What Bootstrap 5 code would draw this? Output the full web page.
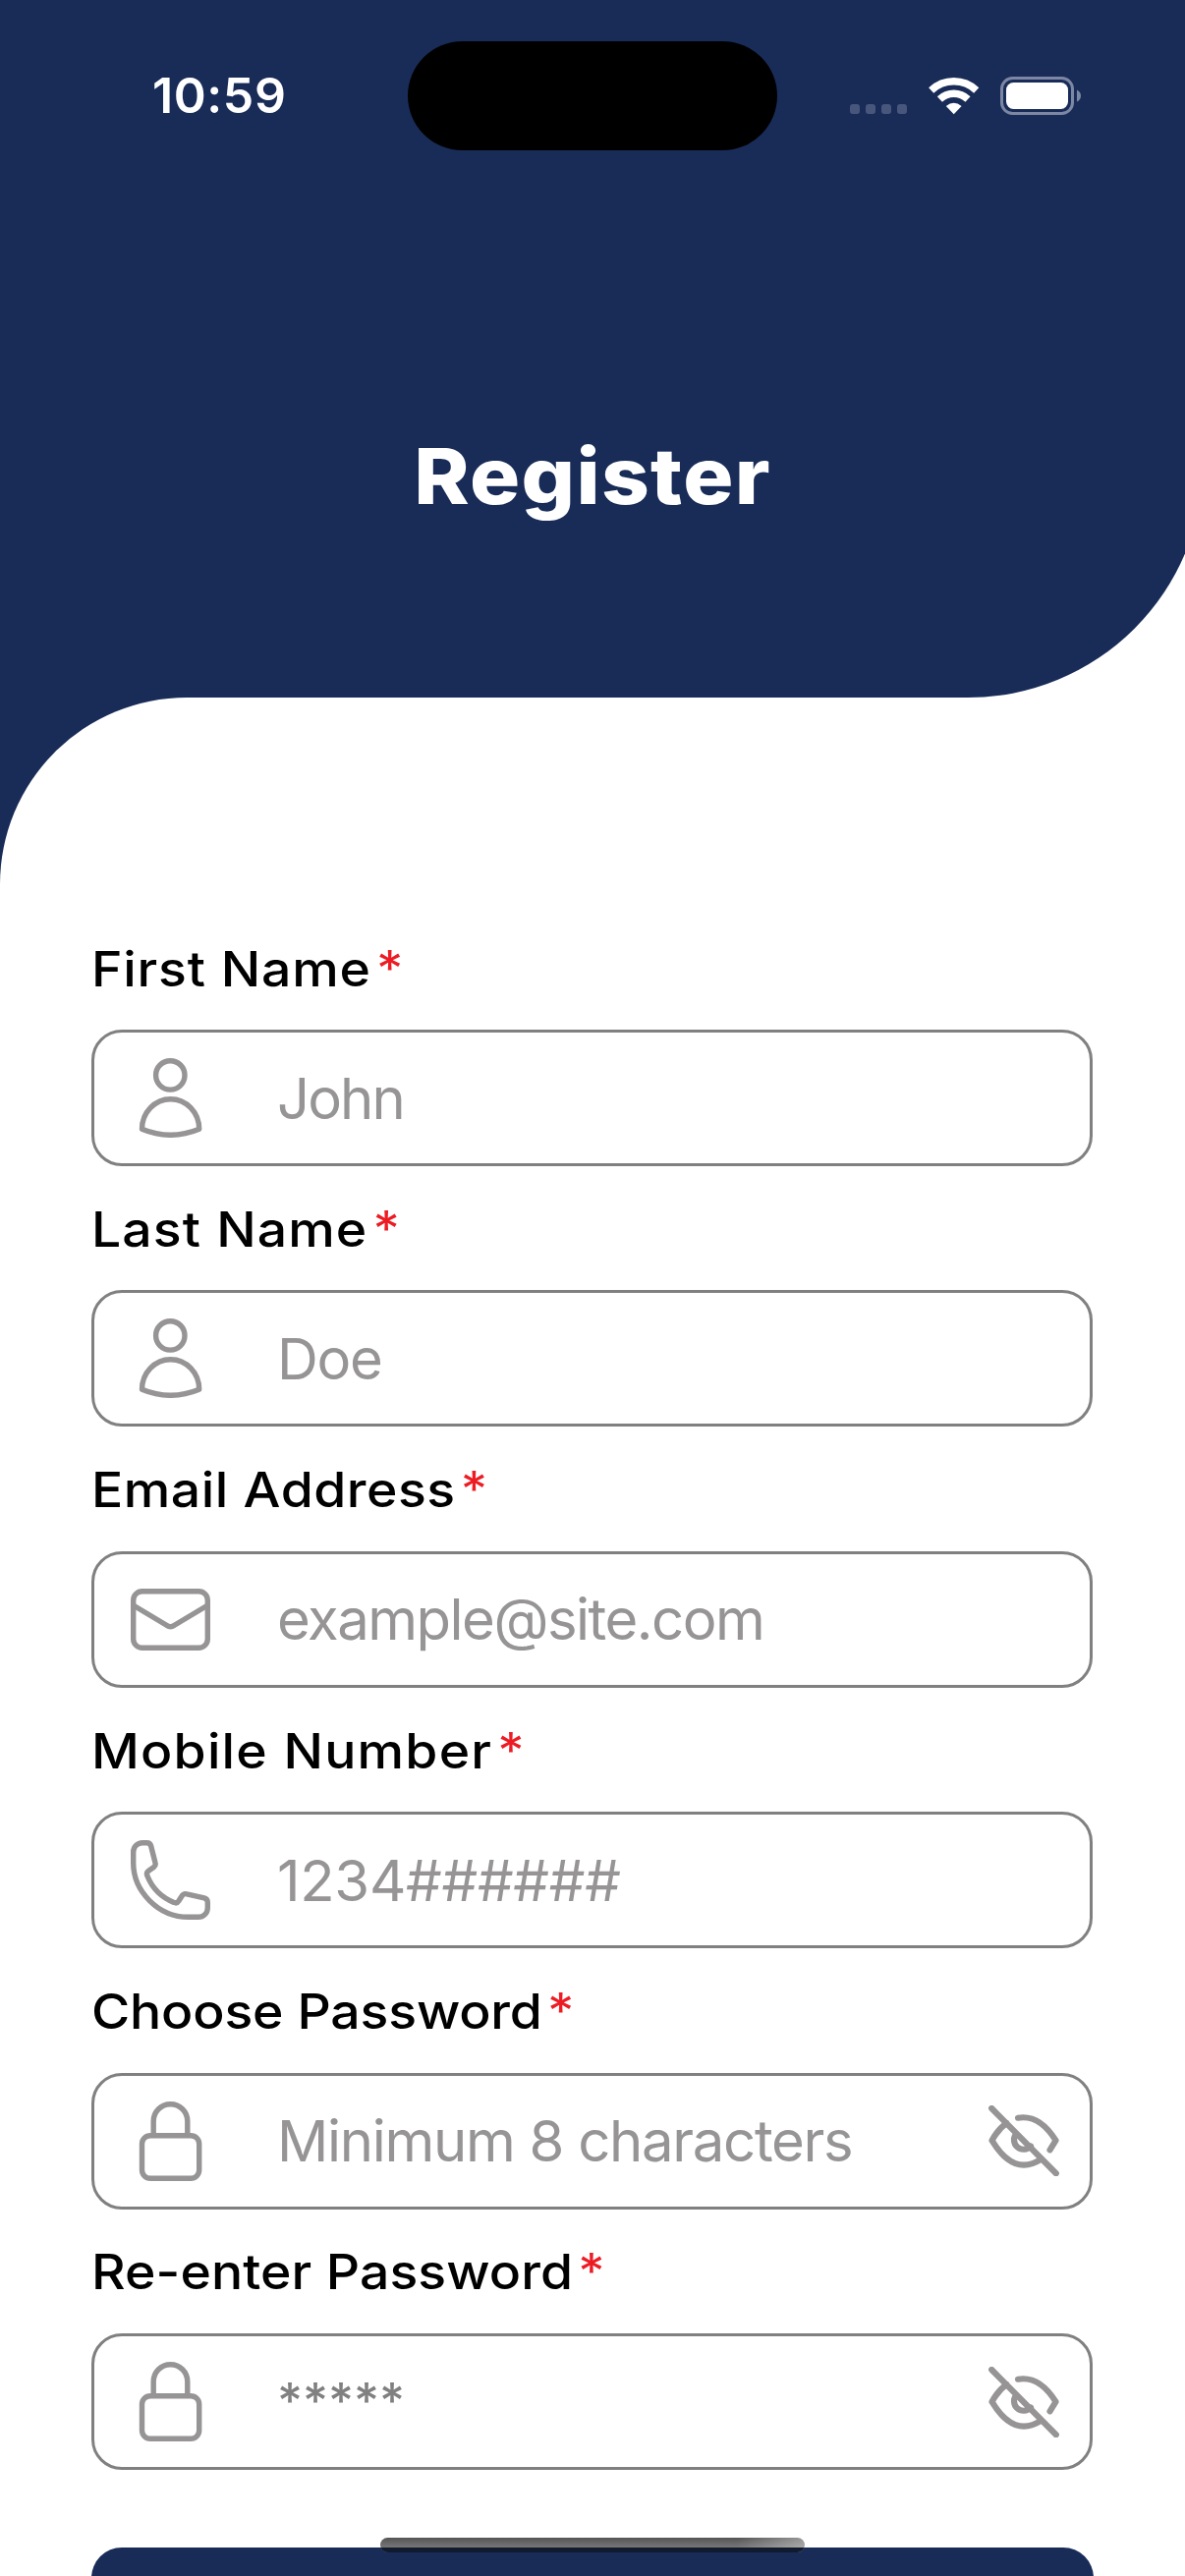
<!DOCTYPE html>
<html lang="en">
<head>
<meta charset="utf-8">
<meta name="viewport" content="width=device-width, initial-scale=1">
<title>Register</title>
<link href="https://cdn.jsdelivr.net/npm/bootstrap@5.3.0/dist/css/bootstrap.min.css" rel="stylesheet">
<style>
:root{--navy:#192c58;--line:#808080;--hint:#969494}
body{font-family:Inter,"Liberation Sans",sans-serif;color:#000;background:#fff}
.screen{width:1206px;height:2622px}
.hero{width:1225px;height:709.5px;background:var(--navy);border-bottom-right-radius:240px}
.status-bar{width:1206px;height:194px;padding-left:155px;padding-right:106px}
.clock{font-size:50px;font-weight:600;letter-spacing:.6px;line-height:60px;width:260px}
.island{width:376px;height:111px;border-radius:56px;background:#000}
.indicators{width:309px}
.page-title{width:1206px;font-size:79px;font-weight:800;letter-spacing:1.2px;line-height:96px;padding-top:242px;transform:scaleX(1.08)}
.sheet-back{background:linear-gradient(var(--navy),var(--navy)) 0 0/190px 190px no-repeat}
.sheet{border-top-left-radius:190px;padding:241px 93px 0}
.field-group{height:265.4px}
.field-label{font-size:50px;font-weight:500;line-height:60px;height:97.6px;padding-top:5px;transform:scaleX(1.07);transform-origin:0 0}
.req{color:#ed1c24;font-weight:400;letter-spacing:0;margin-left:5px}
.field{width:1019px;height:139px;border:3px solid var(--line);border-radius:31px;padding:0 31px 0 37px}
.field .hint{font-size:58px;line-height:72px;color:var(--hint);margin-left:68px}
.field .masked{color:var(--line);font-size:50px;font-weight:500;padding-bottom:4px}
.field svg{stroke:var(--hint);fill:none;stroke-width:5.4;stroke-linejoin:round;stroke-linecap:round;flex:none}
.field svg.eye{stroke-width:6.2}
.submit{width:1020px;height:150px;border-radius:31px;background:var(--navy);border:0;flex:none;margin-top:50px}
.home-bar{left:387px;top:2583px;width:432px;height:15px;border-radius:8px;overflow:hidden;background:linear-gradient(90deg,transparent 84%,rgba(255,255,255,.38)),linear-gradient(#555,#777 66%)}
.home-bar::after{content:"";position:absolute;left:0;right:0;bottom:0;height:5px;background:#121a30}
</style>
</head>
<body>
<svg width="0" height="0" class="d-none">
  <symbol id="person" viewBox="0 0 81 81"><circle cx="40.3" cy="17.4" r="14.7"/><path d="M11.5 72.3A29 30.5 0 0 1 69.7 72.3Q40.5 84.3 11.5 72.3Z"/></symbol>
  <symbol id="mail" viewBox="0 0 81 81"><rect x="2.7" y="11.7" width="75.6" height="57.6" rx="9"/><path d="M3.5 26.5L36.5 46.3Q40.5 49 44.5 46.3L77.5 26.5"/></symbol>
  <symbol id="phone" viewBox="0 0 81 81"><path d="M2.7 12A9.3 9.3 0 0 1 12 2.7H16.5Q20 2.7 20.8 6.5L25 23Q25.8 25.8 23.5 27.5L18.5 31Q15.5 33 17 36.5C22 49 32 58.5 44 63.4Q47 64.8 48.8 62L52 57Q53.8 54 57 54.8L74.8 58.8Q78.3 59.8 78.3 63.2V69A9.3 9.3 0 0 1 69 78.3H58.7C28 78.3 2.7 52 2.7 23.3Z"/></symbol>
  <symbol id="lock" viewBox="0 0 81 81"><rect x="11.5" y="34.7" width="58.2" height="43.6" rx="8.5"/><path d="M23.2 34V20A17.3 17.3 0 0 1 57.8 20V34"/></symbol>
  <symbol id="eye-off" viewBox="0 0 72 72"><path d="M3.2 3L68.8 69.2M30 12.7Q52 9 68.5 35.7L62.5 45.3M18.5 18Q10 24 3.5 35.7Q26 73 54 54.5M28.5 28.5A9.3 9.3 0 1 0 43 41.5"/></symbol>
</svg>
<main class="screen position-relative overflow-hidden d-flex flex-column">
  <header class="hero flex-shrink-0">
    <div class="status-bar d-flex align-items-center">
      <div class="clock text-white">10:59</div>
      <div class="island"></div>
      <div class="indicators d-flex justify-content-end">
        <svg width="235" height="40" viewBox="865 77 235 40">
          <g fill="#48567c"><rect x="865" y="106" width="10" height="10" rx="3"/><rect x="881" y="106" width="10" height="10" rx="3"/><rect x="897" y="106" width="10" height="10" rx="3"/><rect x="913" y="106" width="10" height="10" rx="3"/></g>
          <g fill="none" stroke="#fff" stroke-width="7.4"><path d="M947.7 92A33.3 33.3 0 0 1 993.7 92"/><path d="M956.4 101A20.7 20.7 0 0 1 985 101"/></g>
          <path fill="#fff" d="M970.7 116.3L962.8 108Q970.7 101.5 978.6 108Z"/>
          <rect x="1019.5" y="79.5" width="72" height="36" rx="11" fill="none" stroke="#7c87a3" stroke-width="3"/>
          <rect x="1024" y="84" width="63" height="27" rx="7.5" fill="#fff"/>
          <path d="M1096 91.5Q1100 93.5 1100 97.5T1096 103.5Z" fill="#7c87a3"/>
        </svg>
      </div>
    </div>
    <h1 class="page-title text-center text-white mb-0">Register</h1>
  </header>
  <div class="sheet-back flex-shrink-0">
    <form class="sheet bg-white d-flex flex-column">
      <div class="field-group">
        <div class="field-label"><span style="letter-spacing:.75px">First Name</span><span class="req">*</span></div>
        <div class="field d-flex align-items-center"><svg width="81" height="81"><use href="#person"/></svg><span class="hint" style="letter-spacing:-1.9px">John</span></div>
      </div>
      <div class="field-group">
        <div class="field-label"><span style="letter-spacing:1px">Last Name</span><span class="req">*</span></div>
        <div class="field d-flex align-items-center"><svg width="81" height="81"><use href="#person"/></svg><span class="hint" style="letter-spacing:-1.3px">Doe</span></div>
      </div>
      <div class="field-group">
        <div class="field-label"><span style="letter-spacing:.5px">Email Address</span><span class="req">*</span></div>
        <div class="field d-flex align-items-center"><svg width="81" height="81"><use href="#mail"/></svg><span class="hint" style="letter-spacing:-1.5px">example@site.com</span></div>
      </div>
      <div class="field-group">
        <div class="field-label"><span style="letter-spacing:1.15px">Mobile Number</span><span class="req">*</span></div>
        <div class="field d-flex align-items-center"><svg width="81" height="81"><use href="#phone"/></svg><span class="hint" style="letter-spacing:-.3px">1234######</span></div>
      </div>
      <div class="field-group">
        <div class="field-label"><span style="letter-spacing:-.15px">Choose Password</span><span class="req">*</span></div>
        <div class="field d-flex align-items-center"><svg width="81" height="81"><use href="#lock"/></svg><span class="hint" style="letter-spacing:-1.3px">Minimum 8 characters</span><svg class="eye ms-auto" width="72" height="72"><use href="#eye-off"/></svg></div>
      </div>
      <div class="field-group">
        <div class="field-label"><span style="letter-spacing:.1px">Re-enter Password</span><span class="req">*</span></div>
        <div class="field d-flex align-items-center"><svg width="81" height="81"><use href="#lock"/></svg><span class="hint masked">*****</span><svg class="eye ms-auto" width="72" height="72"><use href="#eye-off"/></svg></div>
      </div>
      <button type="button" class="submit btn"></button>
    </form>
  </div>
  <div class="home-bar position-absolute"></div>
</main>
<script src="https://cdn.jsdelivr.net/npm/bootstrap@5.3.0/dist/js/bootstrap.bundle.min.js"></script>
</body>
</html>
